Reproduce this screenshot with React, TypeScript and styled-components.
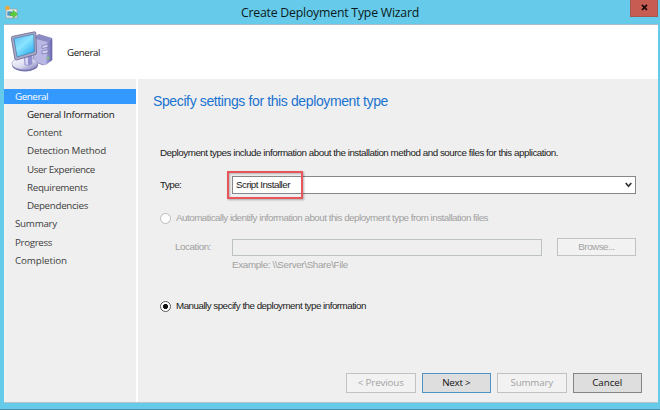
import React from 'react';
import styled, { createGlobalStyle, css } from 'styled-components';

const GlobalStyle = createGlobalStyle`
  *, *::before, *::after { box-sizing: border-box; }
  html, body, #root { margin: 0; height: 100%; overflow: hidden; }
`;

const dialogFont = css`
  font-family: 'Liberation Sans', Arial, sans-serif;
  font-size: 9.8px;
`;
const shellFont = css`
  font-family: 'Open Sans', 'Segoe UI', sans-serif;
  font-size: 9.8px;
`;

const Window = styled.div`
  width: 660px;
  height: 410px;
  display: flex;
  flex-direction: column;
  padding: 0 2px 6px 4px;
  background: #66cbea;
  border-bottom: 1px solid #4a8ba3;
`;

const TitleBar = styled.header`
  height: 24px;
  flex: none;
  display: grid;
  grid-template-columns: 28px 1fr 28px;
  align-items: start;
`;

const AppIcon = styled.svg`
  margin: 5px 0 0 1px;
`;

const Title = styled.h1`
  margin: 0;
  padding-right: 2px;
  text-align: center;
  font: 400 12.3px/25px 'Open Sans', 'Segoe UI', sans-serif;
  letter-spacing: -0.22px;
  color: #0c1a20;
`;

const CloseButton = styled.button`
  display: flex;
  align-items: flex-start;
  justify-content: center;
  height: 17px;
  padding: 4px 0 0;
  border: 1px solid #a5564f;
  border-top: 0;
  background: #c65c52;
`;

const Client = styled.div`
  flex: 1;
  min-height: 0;
  display: flex;
  flex-direction: column;
  background: #efefef;
  border-top: 1px solid #a9bccb;
  border-bottom: 1px solid #b4c4c9;
`;

const Banner = styled.div`
  height: 54px;
  flex: none;
  display: flex;
  align-items: center;
  gap: 14px;
  padding: 0 0 0 7px;
  background: #fff;
`;

const BannerTitle = styled.span`
  ${shellFont}
  letter-spacing: -0.43px;
  color: #151515;
`;

const Body = styled.div`
  flex: 1;
  min-height: 0;
  display: flex;
`;

const Sidebar = styled.nav`
  width: 134px;
  flex: none;
  padding-top: 9.5px;
  border-right: 2px solid #fff;
  border-left: 1px solid #f4f4f2;
`;

const Step = styled.div<{ $track: number; $nested?: boolean; $state?: 'selected' | 'next' }>`
  ${shellFont}
  height: 18.25px;
  line-height: 16px;
  padding-left: ${p => (p.$nested ? 22 : 10)}px;
  letter-spacing: ${p => p.$track}px;
  color: ${p => (p.$state === 'next' ? '#111' : '#404040')};
  ${p => p.$state === 'selected' && css`
    height: 15px;
    margin: 0 0 3.25px -1px;
    padding-left: 11px;
    line-height: 15px;
    color: #fff;
    background: #3399ff;
  `}
`;

const Page = styled.main`
  flex: 1;
  display: flex;
  flex-direction: column;
  padding: 12px 16px 9px 15px;
`;

const Heading = styled.h2`
  margin: 0;
  font: 400 14px/20px 'Liberation Sans', Arial, sans-serif;
  letter-spacing: -0.38px;
  color: #1a73cf;
`;

const Form = styled.section`
  display: flex;
  flex-direction: column;
  margin-top: 36px;
  padding: 0 6px 0 7px;
`;

const Label = styled.span<{ $track: number; $disabled?: boolean }>`
  ${dialogFont}
  line-height: 12px;
  white-space: pre;
  letter-spacing: ${p => p.$track}px;
  color: ${p => (p.$disabled ? '#a0a0a0' : '#1a1a1a')};
`;

const TypeRow = styled.div`
  display: grid;
  grid-template-columns: 72px 404px;
  align-items: center;
  margin-top: 17px;
`;

const Combo = styled.div`
  position: relative;
  height: 18px;
  display: flex;
  align-items: center;
  justify-content: space-between;
  padding: 0 3px;
  background: #fff;
  border: 1px solid #858789;
`;

const Callout = styled.div`
  position: absolute;
  left: -6px;
  top: -6px;
  width: 76px;
  height: 28px;
  border: 2px solid #e8555a;
  box-shadow: 1px 1px 2px rgba(0, 0, 0, 0.3), inset 1px 1px 2px rgba(0, 0, 0, 0.25);
`;

const RadioRow = styled.label<{ $gap: number }>`
  display: flex;
  align-items: center;
  gap: 5px;
  height: 12px;
  margin-top: ${p => p.$gap}px;
`;

const Radio = styled.span<{ $checked?: boolean }>`
  width: 11px;
  height: 11px;
  flex: none;
  border-radius: 50%;
  border: 1px solid ${p => (p.$checked ? '#5a5a5a' : '#bcbcbc')};
  background: ${p => (p.$checked ? 'radial-gradient(circle, #111 0 2.2px, #fff 2.9px)' : '#fdfdfd')};
`;

const LocationRow = styled.div`
  display: grid;
  grid-template-columns: 57px 310px 94px;
  align-items: center;
  margin: 14px 0 0 15px;
`;

const PathInput = styled.div`
  height: 17px;
  border: 1px solid #bcc1c3;
`;

const Button = styled.button<{ $kind?: 'default' | 'disabled'; $track?: number; $dialog?: boolean }>`
  ${p => (p.$dialog ? dialogFont : shellFont)}
  width: ${p => (p.$dialog ? 79 : 69.5)}px;
  height: ${p => (p.$dialog ? 18 : 20)}px;
  margin-left: ${p => (p.$dialog ? 15 : 0)}px;
  padding: 0;
  line-height: 14px;
  letter-spacing: ${p => p.$track ?? 0}px;
  border: 1px solid #858585;
  background: #dedede;
  color: #111;
  ${p => p.$kind === 'default' && css`border-color: #4e93c4;`}
  ${p => p.$kind === 'disabled' && css`
    border-color: #c0c3c4;
    background: #f2f2f2;
    color: #a2a2a2;
  `}
`;

const Hint = styled.div`
  display: flex;
  margin: 3px 0 0 72px;
`;

const Footer = styled.footer`
  display: flex;
  justify-content: flex-end;
  gap: 6px;
  margin-top: auto;
`;

type StepInfo = { name: string; track: number; nested?: boolean; state?: 'selected' | 'next' };
const steps: StepInfo[] = [
  { name: 'General', track: -0.43, state: 'selected' },
  { name: 'General Information', track: -0.29, nested: true, state: 'next' },
  { name: 'Content', track: -0.2, nested: true },
  { name: 'Detection Method', track: -0.21, nested: true },
  { name: 'User Experience', track: -0.41, nested: true },
  { name: 'Requirements', track: -0.31, nested: true },
  { name: 'Dependencies', track: -0.33, nested: true },
  { name: 'Summary', track: -0.27 },
  { name: 'Progress', track: -0.37 },
  { name: 'Completion', track: -0.1 },
];

const WizardGlyph = () => (
  <AppIcon width="13" height="14" viewBox="0 0 13 14">
    <rect x="1" y="4" width="11" height="9" fill="#e9edf0" stroke="#9aa5a8" strokeWidth=".8" />
    <rect x="2.3" y="6.3" width="5" height="4.4" fill="#4f94c9" />
    <path d="M2 12h9" stroke="#c6cdce" />
    <circle cx="2.5" cy="3" r="2.3" fill="#f3a83b" />
    <path d="M5.2 7.6h2.9V5.2l4.5 3.9-4.5 3.8v-2.4H5.2z" fill="#5ccf3a" stroke="#36a32d" strokeWidth=".5" />
  </AppIcon>
);

const ComputerGlyph = () => (
  <svg width="42" height="42" viewBox="0 0 42 42">
    <defs>
      <linearGradient id="screen" x1="0" y1="0" x2=".8" y2="1">
        <stop offset="0" stopColor="#57b9f2" />
        <stop offset=".5" stopColor="#8be4ff" />
        <stop offset="1" stopColor="#29a9ee" />
      </linearGradient>
      <linearGradient id="side" x1="0" y1="0" x2="1" y2="0">
        <stop offset="0" stopColor="#a6a5db" />
        <stop offset="1" stopColor="#6765a9" />
      </linearGradient>
      <linearGradient id="base" x1="0" y1="0" x2="1" y2="1">
        <stop offset="0" stopColor="#fff" />
        <stop offset=".55" stopColor="#dadaf0" />
        <stop offset="1" stopColor="#7875b8" />
      </linearGradient>
    </defs>
    <path d="M22 7 28 3.5 41 7.5V29l-9 5-10-4z" fill="#b6b5e0" stroke="#7776b0" strokeWidth=".7" />
    <path d="M36 11 41 7.5V29l-6 5z" fill="url(#side)" />
    <path d="M22 7 28 3.5 41 7.5 36 11z" fill="#8c8bc3" />
    <path d="M25 9l11 2-1 23-10-4z" fill="#b9b8e4" />
    <path d="M31 14.5l6-1.2v3L31 17.500zM31 20l6-1.200v3L31 23z" fill="#d2d1f0" stroke="#6a68a8" strokeWidth=".6" />
    <path d="M36 26.500l2.200-1v2l-2.200 1z" fill="#76cf67" />
    <ellipse cx="14" cy="34" rx="13" ry="6.400" fill="#716fa9" />
    <ellipse cx="13.6" cy="32.600" rx="12.8" ry="6.200" fill="url(#base)" stroke="#9a99c8" strokeWidth=".6" />
    <path d="M13 26l8-2 .5 9q-4 3-8 1z" fill="#9291cd" />
    <path d="M14 27l3-1v8l-2.5-.5z" fill="#d6d6f2" />
    <path d="M1 5.500 23.500.8q1.3 0 1.3 1.3l.7 19.7q0 1.4-1.4 1.8L5.500 29q-1.4.2-1.7-1.300L.3 7.200Q.2 5.800 1 5.500z" fill="#a9a9c6" stroke="#66658f" strokeWidth=".8" />
    <path d="M2.8 7.4 22.7 3.2l.7 17.6L6.1 26z" fill="url(#screen)" stroke="#4777a8" strokeWidth=".7" />
  </svg>
);

export default function App() {
  return (
    <>
      <GlobalStyle />
      <Window>
        <TitleBar>
          <WizardGlyph />
          <Title>Create Deployment Type Wizard</Title>
          <CloseButton aria-label="Close">
            <svg width="7" height="7" viewBox="0 0 7 7">
              <path d="M1 .8 6 6M6 .8 1 6" stroke="#170b0a" strokeWidth="1.7" />
            </svg>
          </CloseButton>
        </TitleBar>
        <Client>
          <Banner>
            <ComputerGlyph />
            <BannerTitle>General</BannerTitle>
          </Banner>
          <Body>
            <Sidebar>
              {steps.map(s => (
                <Step key={s.name} $track={s.track} $nested={s.nested} $state={s.state}>{s.name}</Step>
              ))}
            </Sidebar>
            <Page>
              <Heading>Specify settings for this deployment type</Heading>
              <Form>
                <Label $track={-0.468}>Deployment types include information about the installation method and source files for this application.</Label>
                <TypeRow>
                  <Label $track={-0.55}>Type:</Label>
                  <Combo>
                    <Label $track={-0.51}>Script Installer</Label>
                    <svg width="7" height="6" viewBox="0 0 7 6">
                      <path d="M.7 1 3.5 4.2 6.3 1" fill="none" stroke="#333" strokeWidth="1.7" />
                    </svg>
                    <Callout />
                  </Combo>
                </TypeRow>
                <RadioRow $gap={18}>
                  <Radio />
                  <Label $disabled $track={-0.5}>Automatically identify information about this deployment type from installation files</Label>
                </RadioRow>
                <LocationRow>
                  <Label $disabled $track={-0.41}>Location:</Label>
                  <PathInput />
                  <Button $dialog $kind="disabled" $track={-0.5} disabled>Browse...</Button>
                </LocationRow>
                <Hint>
                  <Label $disabled $track={-0.33}>{'Example: \\\\Server\\Share\\File'}</Label>
                </Hint>
                <RadioRow $gap={29}>
                  <Radio $checked />
                  <Label $track={-0.514}>Manually specify the deployment type information</Label>
                </RadioRow>
              </Form>
              <Footer>
                <Button $kind="disabled" $track={-0.15} disabled>&lt; Previous</Button>
                <Button $kind="default" $track={-0.27}>Next &gt;</Button>
                <Button $kind="disabled" $track={-0.2} disabled>Summary</Button>
                <Button $track={-0.05}>Cancel</Button>
              </Footer>
            </Page>
          </Body>
        </Client>
      </Window>
    </>
  );
}
